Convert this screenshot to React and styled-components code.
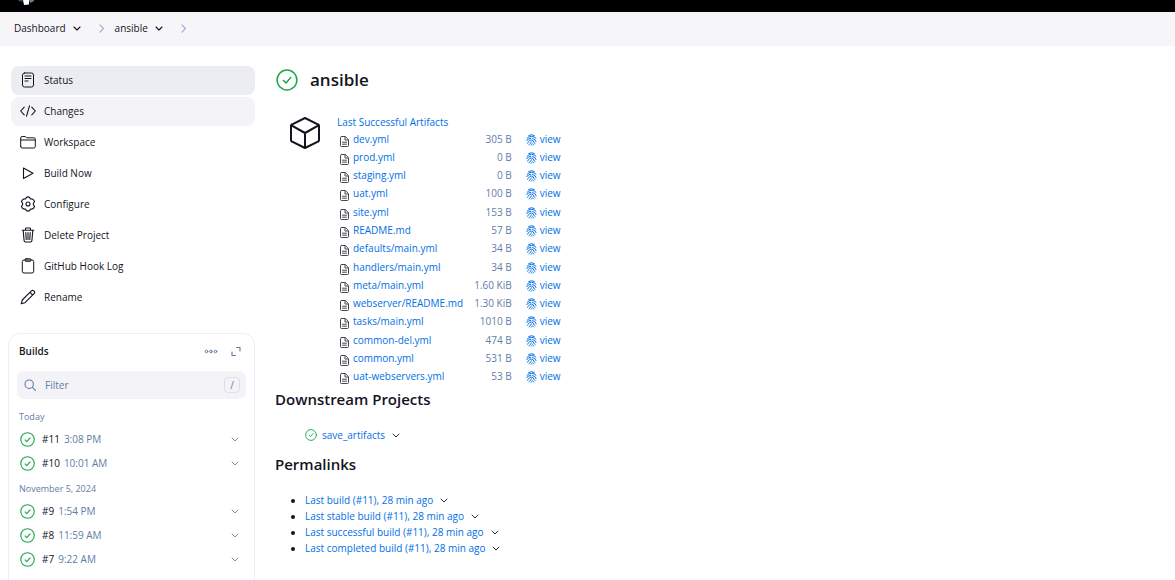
import React from "react";
import styled, { createGlobalStyle } from "styled-components";

const Global = createGlobalStyle`
  *, *::before, *::after { box-sizing: border-box; }
  body { margin: 0; background: #fff; color: #14141f; font: 10px/16px "Open Sans", sans-serif; }
  button, input { font: inherit; color: inherit; }
`;

const TopBar = styled.header`
  height: 12px;
  padding-left: 18px;
  background: #000;
  svg { display: block; }
`;
const Crumbs = styled.nav`
  height: 34px;
  padding: 0 14px 2px;
  display: flex;
  align-items: center;
  background: #f6f6f8;
`;
const Crumb = styled.a`
  color: #14141f;
  font-weight: 500;
  text-decoration: none;
`;
const IconButton = styled.button`
  border: 0;
  background: none;
  padding: 0;
  display: inline-flex;
  align-items: center;
  justify-content: center;
  width: 16px;
  height: 16px;
  color: ${(p) => p.$color || "#14141f"};
`;
const CrumbMenu = styled(IconButton)`margin-left: 3px;`;
const Separator = styled.span`
  display: flex;
  width: 10px;
  margin: 0 8px 0 12px;
  color: #a0b4d2;
`;
const Page = styled.div`
  display: grid;
  grid-template-columns: 244px minmax(0, 1fr);
  gap: 20px;
  padding: 20px 11px 0;
`;
const Tasks = styled.nav`
  display: flex;
  flex-direction: column;
  gap: 2px;
`;
const Task = styled.a`
  display: flex;
  align-items: center;
  gap: 8px;
  height: 29px;
  padding: 0 9px 1px;
  border-radius: 8px;
  color: #14141f;
  font-weight: ${(p) => (p.$active ? 500 : 400)};
  text-decoration: none;
  background: ${(p) => p.$bg || "none"};
`;
const Builds = styled.section`
  margin: 21px 0 0 -3px;
  width: 247px;
  height: 260px;
  padding: 8px 8px;
  border: 1px solid #ededf4;
  border-radius: 12px 12px 0 0;
`;
const BuildsHead = styled.div`
  display: flex;
  align-items: center;
  gap: 9px;
  padding: 0 2px;
`;
const BuildsTitle = styled.h2`
  flex: 1;
  margin: 0;
  font-size: 10px;
  line-height: 18px;
  font-weight: 600;
`;
const FilterBox = styled.label`
  display: flex;
  align-items: center;
  gap: 9px;
  height: 28px;
  margin-top: 11px;
  padding: 0 6px 0 7px;
  border-radius: 7px;
  background: #f3f3f8;
  color: #6080a8;
`;
const FilterInput = styled.input`
  flex: 1;
  min-width: 0;
  border: 0;
  padding: 0;
  background: none;
  outline: 0;
  &::placeholder { color: #5f7da6; opacity: 1; }
`;
const Key = styled.kbd`
  width: 16px;
  height: 16px;
  border: 1px solid #dedee8;
  border-radius: 4px;
  font: 10px/14px "Open Sans", sans-serif;
  text-align: center;
`;
const Day = styled.h3`
  margin: ${(p) => (p.$first ? 10 : 6)}px 2px 2px;
  font-size: 9px;
  line-height: 16px;
  font-weight: 400;
  color: #5f7da6;
`;
const BuildRow = styled.div`
  display: flex;
  align-items: center;
  height: 24px;
  padding: 0 3px;
  svg { flex: none; }
`;
const BuildLink = styled.a`
  margin: 0 4px 0 7px;
  color: #14141f;
  text-decoration: none;
`;
const BuildTime = styled.span`
  flex: 1;
  color: #5f7da6;
`;
const Main = styled.main`min-width: 0;`;
const TitleRow = styled.div`
  display: flex;
  align-items: center;
  gap: 12px;
  height: 28px;
  padding-left: 1px;
`;
const Title = styled.h1`
  margin: 0;
  font-size: 17px;
  line-height: 28px;
  font-weight: 600;
`;
const Artifacts = styled.section`
  display: flex;
  gap: 17px;
  padding: 20px 0 1px 15px;
`;
const CubeBox = styled.div`padding-top: 3px;`;
const Link = styled.a`
  color: #006fe6;
  text-decoration: none;
`;
const Files = styled.table`
  height: 256px;
  border-collapse: collapse;
  td { padding: 0 0 1px; white-space: nowrap; }
`;
const FileIconCell = styled.td`
  width: 16px;
  svg { display: block; margin: 5px 0 0 3px; }
`;
const SizeCell = styled.td`
  && { padding-left: 11px; }
  text-align: right;
  color: #5f7da6;
`;
const ViewCell = styled.td`
  a { display: flex; align-items: center; gap: 3px; margin-left: 14px; }
`;
const Heading = styled.h2`
  margin: 0;
  font-size: 15px;
  line-height: 24px;
  font-weight: 600;
`;
const Downstream = styled.div`
  display: flex;
  align-items: center;
  gap: 5px;
  padding: 16px 0 9px 30px;
`;
const Permalinks = styled.ul`
  margin: 16px 0 0;
  padding-left: 30px;
  li { height: 16px; }
`;
const LinkMenu = styled(IconButton)`
  vertical-align: top;
  margin-left: 3px;
`;

const S = ({ s = 16, h, vb = "0 0 16 16", w = 1, children, ...rest }) => (
  <svg width={s} height={h || s} viewBox={vb} fill="none" stroke="currentColor" strokeWidth={w} strokeLinecap="round" strokeLinejoin="round" aria-hidden="true" {...rest}>{children}</svg>
);
const Chevron = ({ s = 8, w = 0.9 }) => <S s={s} vb="0 0 8 8" w={w}><path d="M1 3 4 6 7 3" /></S>;
const ChevronRight = () => <S s={10} vb="0 0 10 10" w={1.2}><path d="M3 2 6.500 5.500 3 9" /></S>;
const Success = ({ s, w = 1.2 }) => (
  <S s={s} vb="0 0 16 16" w={w} style={{ color: "#1ea64b" }}><circle cx="8" cy="8" r="7.2" /><path d="m5.4 8.3 1.900 1.900 3.400-4" /></S>
);
const DocIcon = () => (
  <S s={9} h={11} vb="0 0 9 11" w={1} style={{ color: "#44444e" }}><path d="M1.5.5h3.800l3.200 3.200v5.800a1 1 0 0 1-1 1h-6a1 1 0 0 1-1-1v-8a1 1 0 0 1 1-1zM5 .8V4h3.200M2.500 6.200h4M2.500 8.200h4" /></S>
);
const Fingerprint = () => (
  <S s={11} h={14} vb="-0.500 -2 11 14" w={1}>
    <path d="M2.200 1.500Q5-.3 7.800 1.500M.5 4.300Q2 2.400 5 2.400T9.500 4.300M.2 6.700Q1.200 4.400 4.300 4.300M6.200 4.500Q9 5 9.600 7.600M.9 9.200Q2.400 8.200 2.500 7.200 3 6 5 6T7.300 8.300Q7.500 9 8.600 9.600M2.500 10.700Q4.500 9.600 4.900 7.900M4.700 11.300Q5.600 10.600 5.800 9.800M7.200 11 6.900 10.600" />
  </S>
);
const Cube = () => (
  <S s={30} h={32} vb="0.5 0.5 31 33" w={2.1}><path d="M16 1.500 29.200 8a2 2 0 0 1 1.300 1.800v14.400a2 2 0 0 1-1.200 1.800L16 32.500 2.700 26a2 2 0 0 1-1.200-1.800V9.800A2 2 0 0 1 2.800 8zM2 9l14 8 14-8M16 17v15.500" /></S>
);

const icons = {
  status: <S><rect x="2.500" y="1" width="11" height="14" rx="2" /><path d="M5 4h6M5 6.500h6M5 9h3" /></S>,
  code: <S w={1.100}><path d="M4.200 4.200.7 8l3.500 3.800M11.800 4.200 15.300 8l-3.500 3.800M9.500 2.800l-3 10.400" /></S>,
  folder: <S><path d="M.7 12.500V4a1.500 1.500 0 0 1 1.500-1.500h3l1.500 1.300h7A1.500 1.500 0 0 1 15.300 5.300v7.200a1.500 1.500 0 0 1-1.500 1.500H2.200a1.500 1.500 0 0 1-1.500-1.500zM.7 6h14.600" /></S>,
  play: <S w={1.100}><path d="M3.500 3v10.500L13 8.300z" /></S>,
  gear: <S w={1.100}><circle cx="8" cy="8" r="2" /><path d="M6.300 1.500 Q8 .3 9.700 1.500L10.400 3 12.200 2.900Q14.300 3.700 14.500 5.600L13.400 7.300V8.700L14.500 10.400Q14.300 12.300 12.200 13.100L10.400 13 9.700 14.500Q8 15.700 6.300 14.500L5.600 13 3.800 13.100Q1.700 12.300 1.500 10.400L2.600 8.700V7.300L1.500 5.600Q1.700 3.700 3.800 2.900L5.600 3z" /></S>,
  trash: <S w={1.100}><path d="M2.200 3.200h11.600M5.500 3V1.800a.8.800 0 0 1 .8-.8h3.400a.8.800 0 0 1 .8.8V3M3.200 3.500l.9 10.200A1.400 1.400 0 0 0 5.500 15h5a1.400 1.400 0 0 0 1.400-1.300l.9-10.200M5.800 5.500l.4 7M8 5.500v7M10.200 5.500l-.4 7" /></S>,
  clipboard: <S><path d="M5 2H4a1.700 1.700 0 0 0-1.700 1.700v9.600A1.700 1.700 0 0 0 4 15h8a1.700 1.700 0 0 0 1.700-1.700V3.700A1.700 1.700 0 0 0 12 2h-1" /><rect x="5" y=".8" width="6" height="2.500" rx="1" fill="#888890" /></S>,
  pencil: <S w={1.100}><path d="M1.200 14.800 2.300 11 11.400 1.900a1.700 1.700 0 0 1 2.400 0l.3.3a1.700 1.700 0 0 1 0 2.400L5 13.700zM10 3.400l2.600 2.600" /></S>,
};
const tasks = [
  ["Status", "status", "#ecedf2"], ["Changes", "code", "#f4f4f8"], ["Workspace", "folder"], ["Build Now", "play"],
  ["Configure", "gear"], ["Delete Project", "trash"], ["GitHub Hook Log", "clipboard"], ["Rename", "pencil"],
];
const files = [
  ["dev.yml", "305 B"], ["prod.yml", "0 B"], ["staging.yml", "0 B"], ["uat.yml", "100 B"], ["site.yml", "153 B"],
  ["README.md", "57 B"], ["defaults/main.yml", "34 B"], ["handlers/main.yml", "34 B"], ["meta/main.yml", "1.60 KiB"],
  ["webserver/README.md", "1.30 KiB"], ["tasks/main.yml", "1010 B"], ["common-del.yml", "474 B"], ["common.yml", "531 B"],
  ["uat-webservers.yml", "53 B"],
];
const Build = ({ id, time }) => (
  <BuildRow>
    <Success s={15} />
    <BuildLink href="#">{id}</BuildLink>
    <BuildTime>{time}</BuildTime>
    <IconButton $color="#6484b0" aria-label={`Menu for ${id}`}><Chevron /></IconButton>
  </BuildRow>
);

export default function App() {
  return (
    <>
      <Global />
      <TopBar>
        <svg width="18" height="6" viewBox="0 0 18 6" aria-hidden="true">
          <path d="M0 0h4l1 2-4-1z" fill="#335061" /><path d="M5 0h6v4.500L6 5z" fill="#fff" /><path d="M11 0h5v1l-4 2z" fill="#6d8089" />
        </svg>
      </TopBar>
      <Crumbs aria-label="Breadcrumb">
        <Crumb href="#">Dashboard</Crumb>
        <CrumbMenu aria-label="Dashboard menu"><Chevron w={1.1} /></CrumbMenu>
        <Separator><ChevronRight /></Separator>
        <Crumb href="#">ansible</Crumb>
        <CrumbMenu aria-label="ansible menu"><Chevron w={1.1} /></CrumbMenu>
        <Separator><ChevronRight /></Separator>
      </Crumbs>
      <Page>
        <aside>
          <Tasks>
            {tasks.map(([label, icon, bg]) => <Task href="#" key={label} $bg={bg} $active={icon === "status"}>{icons[icon]}{label}</Task>)}
          </Tasks>
          <Builds>
            <BuildsHead>
              <BuildsTitle>Builds</BuildsTitle>
              <IconButton $color="#6080a8" aria-label="More">
                <S s={14} vb="0 0 14 14" w={1}><circle cx="2.500" cy="7.500" r="1.300" /><circle cx="7" cy="7.500" r="1.300" /><circle cx="11.500" cy="7.500" r="1.300" /></S>
              </IconButton>
              <IconButton $color="#6080a8" aria-label="Expand">
                <S s={10} vb="0 0 10 10" w={1.200}><path d="M5.500 1.500h3.500V5M1 6V9.500h3.500" /></S>
              </IconButton>
            </BuildsHead>
            <FilterBox>
              <S s={12} vb="0 0 12 12" w={1.100}><circle cx="5.200" cy="5.200" r="4.200" /><path d="m8.400 8.400 3 3" /></S>
              <FilterInput placeholder="Filter" aria-label="Filter builds" />
              <Key>/</Key>
            </FilterBox>
            <Day $first>Today</Day>
            <Build id="#11" time="3:08 PM" />
            <Build id="#10" time="10:01 AM" />
            <Day>November 5, 2024</Day>
            <Build id="#9" time="1:54 PM" />
            <Build id="#8" time="11:59 AM" />
            <Build id="#7" time="9:22 AM" />
          </Builds>
        </aside>
        <Main>
          <TitleRow><Success s={22} w={1.100} /><Title>ansible</Title></TitleRow>
          <Artifacts>
            <CubeBox><Cube /></CubeBox>
            <div>
              <Link href="#">Last Successful Artifacts</Link>
              <Files>
                <tbody>
                  {files.map(([name, size]) => (
                    <tr key={name}>
                      <FileIconCell><DocIcon /></FileIconCell>
                      <td><Link href="#">{name}</Link></td>
                      <SizeCell>{size}</SizeCell>
                      <ViewCell><Link href="#"><Fingerprint />view</Link></ViewCell>
                    </tr>
                  ))}
                </tbody>
              </Files>
            </div>
          </Artifacts>
          <Heading>Downstream Projects</Heading>
          <Downstream>
            <Success s={12} />
            <span><Link href="#">save_artifacts</Link><LinkMenu aria-label="save_artifacts menu"><Chevron /></LinkMenu></span>
          </Downstream>
          <Heading>Permalinks</Heading>
          <Permalinks>
            {["build", "stable build", "successful build", "completed build"].map((n) => (
              <li key={n}><Link href="#">Last {n} (#11), 28 min ago</Link><LinkMenu aria-label={`Last ${n} menu`}><Chevron /></LinkMenu></li>
            ))}
          </Permalinks>
        </Main>
      </Page>
    </>
  );
}
